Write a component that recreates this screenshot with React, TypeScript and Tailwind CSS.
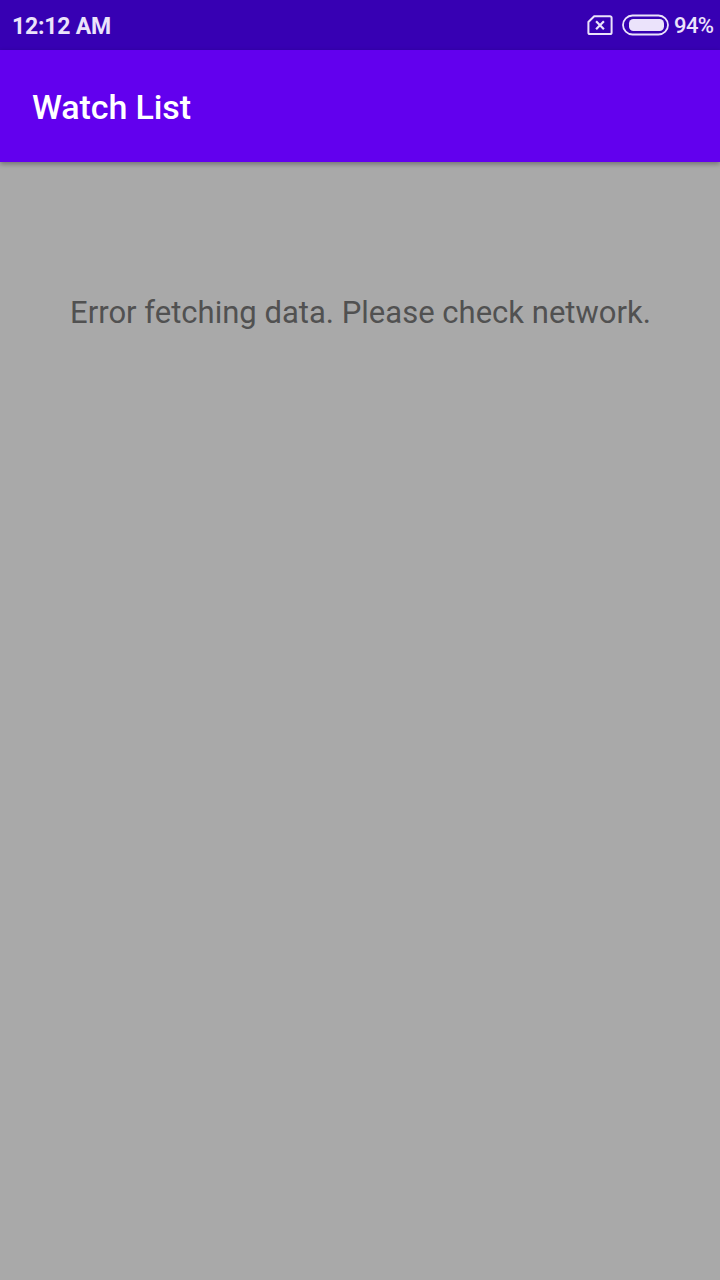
function NoSimIcon() {
  return (
    <svg className="h-[20px] w-[26px] shrink-0" viewBox="0 0 26 20" fill="none" stroke="#ebe3fb" strokeWidth="2">
      <path d="M7.2 1.2H23a1.6 1.6 0 0 1 1.6 1.6v14.6A1.6 1.6 0 0 1 23 19H3a1.6 1.6 0 0 1-1.6-1.6V7Z" strokeLinejoin="round" />
      <path d="M9.1 6.2l7.8 8M16.9 6.2l-7.8 8" strokeWidth="2.2" />
    </svg>
  );
}

function BatteryIcon() {
  return (
    <svg className="ml-[9px] h-[22px] w-[47px] shrink-0" viewBox="0 0 47 22" fill="none">
      <rect x="1" y="1.5" width="45" height="19" rx="9.5" stroke="#ebe3fb" strokeWidth="1.8" />
      <rect x="7" y="5" width="35" height="12" rx="4.5" fill="#ebe3fb" />
    </svg>
  );
}

function StatusBar() {
  return (
    <div className="flex h-[50px] items-center justify-between bg-[#3700b3] pr-[6px] pl-[12px] text-[#ebe3fb]">
      <span className="pt-[3px] text-[23px] leading-none font-bold tracking-[-0.2px] whitespace-nowrap">12:12 AM</span>
      <div className="flex items-center">
        <NoSimIcon />
        <BatteryIcon />
        <span className="ml-[5px] w-[40px] pt-[2px] text-[22px] leading-none font-medium tracking-[-0.6px] whitespace-nowrap">94%</span>
      </div>
    </div>
  );
}

export default function App() {
  return (
    <div className="flex h-[1280px] w-[720px] flex-col bg-[#a9a9a9] font-['Roboto',sans-serif]">
      <StatusBar />
      <header className="flex h-[112px] items-center bg-[#6200ee] px-8 pt-[2px] shadow-[0_2px_5px_rgba(0,0,0,0.33)]">
        <h1 className="text-[34px] leading-none font-medium tracking-[-0.1px] whitespace-nowrap text-white">Watch List</h1>
      </header>
      <main className="flex flex-1 flex-col items-center pt-[132px]">
        <p className="pl-px text-[31px] leading-[38px] tracking-[0.01px] whitespace-nowrap text-[#515151]">
          Error fetching data. Please check network.
        </p>
      </main>
    </div>
  );
}
